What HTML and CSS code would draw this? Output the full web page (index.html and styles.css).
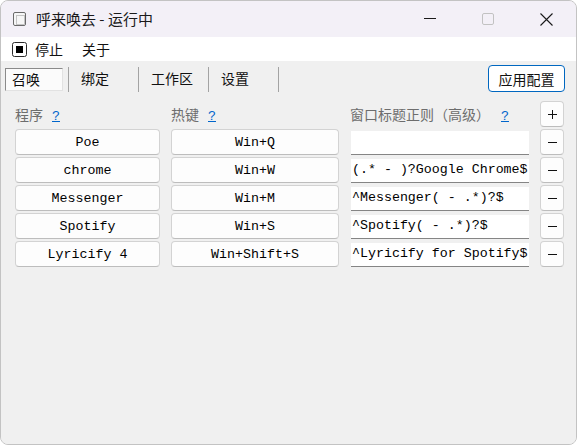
FILE: index.html
```html
<!DOCTYPE html>
<html lang="zh">
<head>
<meta charset="utf-8">
<title>呼来唤去</title>
<link rel="stylesheet" href="styles.css">
</head>
<body>
<div class="window">
  <div class="titlebar">
    <svg class="app-icon" width="13" height="14" viewBox="0 0 13 14">
      <rect x="0.5" y="0.5" width="12" height="13" rx="1.5" fill="#f6f6f6" stroke="#6a6a6a"/>
      <rect x="3.5" y="3.5" width="8" height="9" fill="none" stroke="#c4c4c4"/>
    </svg>
    <span class="title">呼来唤去 - 运行中</span>
    <div class="caption">
      <div class="cap-btn">
        <svg width="12" height="12" viewBox="0 0 12 12"><line x1="0" y1="5.5" x2="12" y2="5.5" stroke="#1a1a1a" stroke-width="1"/></svg>
      </div>
      <div class="cap-btn">
        <svg width="12" height="12" viewBox="0 0 12 12"><rect x="0.5" y="0.5" width="11" height="11" rx="1.5" fill="none" stroke="#c2c2c2"/></svg>
      </div>
      <div class="cap-btn">
        <svg width="13" height="13" viewBox="0 0 13 13"><path d="M0.5 0.5 L12.5 12.5 M12.5 0.5 L0.5 12.5" stroke="#1a1a1a" stroke-width="1.1"/></svg>
      </div>
    </div>
  </div>
  <div class="menubar">
    <svg class="menu-icon" width="15" height="15" viewBox="0 0 15 15">
      <rect x="0.5" y="0.5" width="14" height="14" rx="2" fill="#ffffff" stroke="#2b2b2b"/>
      <rect x="4" y="4" width="7" height="7" fill="#000000"/>
    </svg>
    <span class="menu-item first">停止</span>
    <span class="menu-item">关于</span>
  </div>
  <div class="content">
    <div class="toolbar">
      <div class="tab active">召唤</div>
      <div class="sep"></div>
      <div class="tab">绑定</div>
      <div class="sep"></div>
      <div class="tab">工作区</div>
      <div class="sep"></div>
      <div class="tab">设置</div>
      <div class="sep"></div>
      <button class="apply">应用配置</button>
    </div>
    <div class="grid">
      <div class="head">程序<a class="help">?</a></div>
      <div class="head">热键<a class="help">?</a></div>
      <div class="head">窗口标题正则（高级）<a class="help">?</a></div>
      <button class="icon-btn head-btn"><svg width="9" height="9" viewBox="0 0 9 9"><path d="M0 4.5 H9 M4.5 0 V9" stroke="#111" stroke-width="1"/></svg></button>

      <button class="btn">Poe</button>
      <button class="btn">Win+Q</button>
      <div class="regex"></div>
      <button class="icon-btn"><svg width="9" height="9" viewBox="0 0 9 9"><path d="M0 4.5 H9" stroke="#111" stroke-width="1"/></svg></button>

      <button class="btn">chrome</button>
      <button class="btn">Win+W</button>
      <div class="regex">(.* - )?Google Chrome$</div>
      <button class="icon-btn"><svg width="9" height="9" viewBox="0 0 9 9"><path d="M0 4.5 H9" stroke="#111" stroke-width="1"/></svg></button>

      <button class="btn">Messenger</button>
      <button class="btn">Win+M</button>
      <div class="regex">^Messenger( - .*)?$</div>
      <button class="icon-btn"><svg width="9" height="9" viewBox="0 0 9 9"><path d="M0 4.5 H9" stroke="#111" stroke-width="1"/></svg></button>

      <button class="btn">Spotify</button>
      <button class="btn">Win+S</button>
      <div class="regex">^Spotify( - .*)?$</div>
      <button class="icon-btn"><svg width="9" height="9" viewBox="0 0 9 9"><path d="M0 4.5 H9" stroke="#111" stroke-width="1"/></svg></button>

      <button class="btn">Lyricify 4</button>
      <button class="btn">Win+Shift+S</button>
      <div class="regex">^Lyricify for Spotify$</div>
      <button class="icon-btn"><svg width="9" height="9" viewBox="0 0 9 9"><path d="M0 4.5 H9" stroke="#111" stroke-width="1"/></svg></button>
    </div>
  </div>
</div>
</body>
</html>
```

FILE: styles.css
```css
* { box-sizing: border-box; }

html, body {
  margin: 0;
  padding: 0;
  background: #ffffff;
}

body {
  font-family: "Noto Sans CJK SC", "Noto Sans", sans-serif;
  font-size: 14px;
  color: #1a1a1a;
}

.window {
  width: 577px;
  height: 445px;
  border: 1px solid #c3c3c3;
  border-radius: 8px;
  overflow: hidden;
  display: flex;
  flex-direction: column;
  background: #f0f0f0;
}

.titlebar {
  height: 36px;
  flex: none;
  display: flex;
  align-items: center;
  background: #f3f0f7;
}

.app-icon {
  margin-left: 12px;
  display: block;
}

.title {
  margin-left: 10px;
  font-size: 15px;
  line-height: 20px;
  color: #1a1a1a;
}

.caption {
  margin-left: auto;
  margin-right: 1px;
  display: flex;
  height: 36px;
}

.cap-btn {
  width: 58px;
  height: 36px;
  display: flex;
  align-items: center;
  justify-content: center;
}

.cap-btn svg { display: block; }

.menubar {
  height: 24px;
  flex: none;
  display: flex;
  align-items: center;
  background: #ffffff;
}

.menu-icon {
  margin-left: 11px;
  display: block;
}

.menu-item {
  font-size: 14px;
  line-height: 20px;
  color: #111;
  margin-left: 19px;
}

.menu-item.first { margin-left: 8px; }

.content {
  flex: 1;
  background: #f0f0f0;
}

.toolbar {
  display: flex;
  align-items: center;
  padding-top: 4px;
  height: 31px;
}

.tab {
  width: 69px;
  height: 23px;
  padding-left: 12px;
  font-size: 14px;
  line-height: 21px;
  color: #111;
  margin-top: 2px;
}

.tab.active {
  width: 58px;
  margin-left: 4px;
  margin-right: 5px;
  padding-left: 6px;
  background: #fbfbfb;
  border-top: 1px solid #8a8a8a;
  border-left: 1px solid #8a8a8a;
  border-bottom: 1px solid #e2e2e2;
  border-right: 1px solid #e2e2e2;
}

.sep {
  width: 1px;
  height: 25px;
  background: #a3a3a3;
  margin-top: 2px;
}

.apply {
  margin-left: auto;
  margin-right: 11px;
  width: 77px;
  height: 27px;
  padding: 0;
  font-family: "Noto Sans CJK SC", sans-serif;
  font-size: 14px;
  line-height: 20px;
  color: #111;
  background: #ffffff;
  border: 1px solid #0067c0;
  border-radius: 4px;
}

.grid {
  margin-top: 9px;
  padding-left: 14px;
  display: grid;
  grid-template-columns: 145px 168px 179px 24px;
  grid-template-rows: 26px repeat(5, 26px);
  column-gap: 11px;
  row-gap: 2px;
}

.head {
  align-self: end;
  font-size: 14px;
  line-height: 20px;
  color: #6d6d6d;
  white-space: nowrap;
}

.help {
  margin-left: 9px;
  font-family: "Liberation Mono", monospace;
  font-size: 13.3px;
  color: #0066cc;
  text-decoration: underline;
}

.head:nth-child(3) .help { margin-left: 11px; }

.btn {
  height: 26px;
  padding: 0;
  font-family: "Liberation Mono", monospace;
  font-size: 13.3px;
  color: #000;
  background: #fdfdfd;
  border: 1px solid #d3d3d3;
  border-bottom-color: #bdbdbd;
  border-radius: 4px;
}

.regex {
  align-self: end;
  margin-left: 1px;
  width: 178px;
  height: 24px;
  padding: 0 0 2px 1px;
  font-family: "Liberation Mono", monospace;
  font-size: 13.3px;
  line-height: 21px;
  color: #000;
  background: #ffffff;
  border-bottom: 1px solid #858585;
  white-space: nowrap;
  overflow: hidden;
}

.icon-btn {
  width: 24px;
  height: 26px;
  padding: 0;
  display: flex;
  align-items: center;
  justify-content: center;
  background: #fdfdfd;
  border: 1px solid #d3d3d3;
  border-bottom-color: #bdbdbd;
  border-radius: 4px;
}

.icon-btn svg { display: block; }
```
